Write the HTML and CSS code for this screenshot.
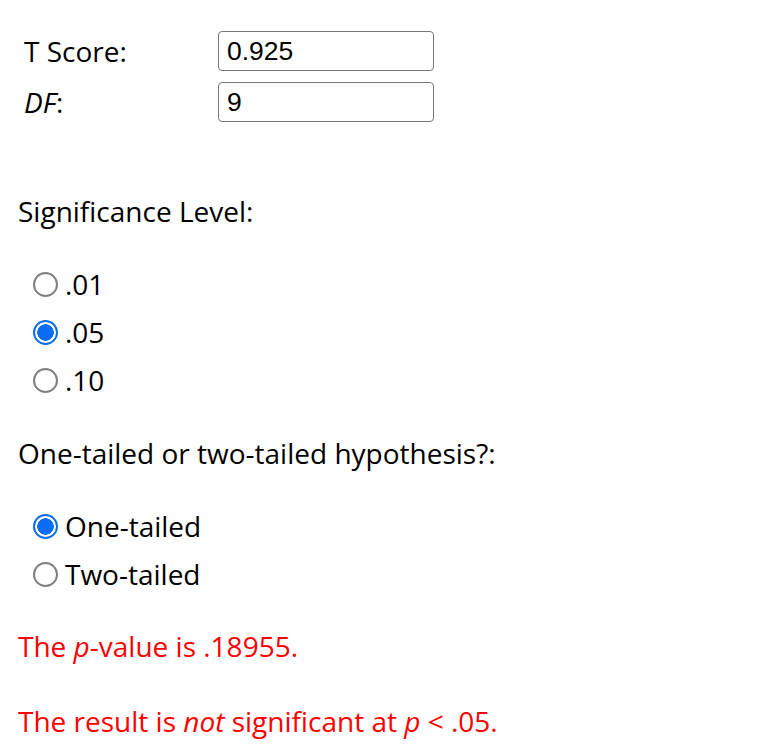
FILE: index.html
```html
<!DOCTYPE html>
<html>
<head>
<meta charset="utf-8">
<link rel="stylesheet" href="styles.css">
</head>
<body>
<div class="page">
  <div class="fields">
    <div class="field">
      <label class="lbl">T Score:</label>
      <input class="box" type="text" value="0.925">
    </div>
    <div class="field">
      <label class="lbl"><i>DF</i>:</label>
      <input class="box" type="text" value="9">
    </div>
  </div>

  <div class="heading sig">Significance Level:</div>
  <div class="radios">
    <label class="opt"><input type="radio" name="sig"><span>.01</span></label>
    <label class="opt"><input type="radio" name="sig" checked><span>.05</span></label>
    <label class="opt"><input type="radio" name="sig"><span>.10</span></label>
  </div>

  <div class="heading">One-tailed or two-tailed hypothesis?:</div>
  <div class="radios">
    <label class="opt"><input type="radio" name="tail" checked><span>One-tailed</span></label>
    <label class="opt"><input type="radio" name="tail"><span>Two-tailed</span></label>
  </div>

  <p class="result r1">The <i>p</i>-value is .18955.</p>
  <p class="result r2">The result is <i>not</i> significant at <i>p</i> &lt; .05.</p>
</div>
</body>
</html>
```
FILE: styles.css
```css
html, body { margin: 0; padding: 0; background: #fff; }
body { font-family: "Open Sans", sans-serif; font-size: 28px; color: #000; }
.page { padding: 0 0 0 18px; }
.fields { padding-top: 31px; display: flex; flex-direction: column; gap: 11px; padding-left: 6px; }
.field { display: flex; align-items: center; height: 40px; }
.lbl { width: 194px; line-height: 40px; }
.box {
  width: 216px; height: 40px; box-sizing: border-box;
  border: 1.5px solid #777; border-radius: 4px;
  font-family: "Liberation Sans", Arial, sans-serif; font-size: 26.5px;
  padding: 0 8px; margin: 0; color: #000; outline: none;
}
.heading { line-height: 40px; margin-top: 29px; }
.sig { margin-top: 69px; }
.radios { display: flex; flex-direction: column; margin-top: 29px; }
.opt { display: flex; align-items: center; height: 48px; line-height: 48px; }
.opt input {
  -webkit-appearance: none; appearance: none;
  width: 25px; height: 25px; margin: 0 7px 0 15px; box-sizing: border-box;
  border: 2px solid #7f7f7f; border-radius: 50%; background: #fff;
  flex: none;
}
.opt input:checked {
  border: 2.5px solid #0a6cf4;
  background: radial-gradient(circle, #0a6cf4 0 8px, #fff 8.5px);
}
.result { color: #ff0000; margin: 0; line-height: 40px; }
.r1 { margin-top: 28px; }
.r2 { margin-top: 35px; }
```
